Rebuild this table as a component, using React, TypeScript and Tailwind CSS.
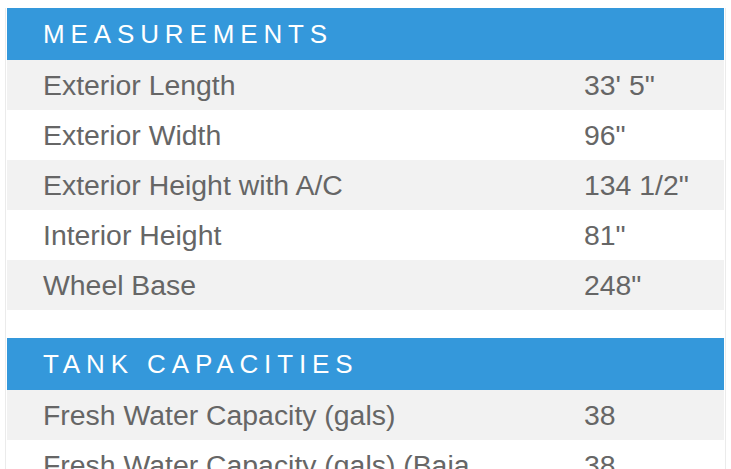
import React from 'react';

type Spec = { label: string; value: string };

const sections: { title: string; rows: Spec[] }[] = [
    {
        title: 'Measurements',
        rows: [
            { label: 'Exterior Length', value: `33' 5"` },
            { label: 'Exterior Width', value: '96"' },
            { label: 'Exterior Height with A/C', value: '134 1/2"' },
            { label: 'Interior Height', value: '81"' },
            { label: 'Wheel Base', value: '248"' },
        ],
    },
    {
        title: 'Tank Capacities',
        rows: [
            { label: 'Fresh Water Capacity (gals)', value: '38' },
            { label: 'Fresh Water Capacity (gals) (Baja Edition)', value: '38' },
            { label: 'Gray Water Capacity (gals)', value: '40' },
        ],
    },
];

export default function App() {
    return (
        <div className="min-h-screen bg-white pt-2 font-['Liberation_Sans',Arial,sans-serif]">
            <div className="ml-[5px] w-[721px] border-x border-[#ebebeb] px-px">
                {sections.map((section) => (
                    <div key={section.title} className="mb-[28px]">
                        <div className="h-[52px] flex items-center bg-[#3498db] pl-9">
                            <h2 className="text-[26px] uppercase tracking-[0.226em] text-white leading-none">
                                {section.title}
                            </h2>
                        </div>
                        {section.rows.map((row, i) => (
                            <div
                                key={row.label}
                                className={`flex text-[28.4px] leading-[32px] text-[#666666] py-[9px] ${i % 2 === 0 ? 'bg-[#f2f2f2]' : 'bg-white'}`}
                            >
                                <div className="w-[577px] shrink-0 pl-9 pr-10">{row.label}</div>
                                <div className="flex-1">{row.value}</div>
                            </div>
                        ))}
                    </div>
                ))}
            </div>
        </div>
    );
}
